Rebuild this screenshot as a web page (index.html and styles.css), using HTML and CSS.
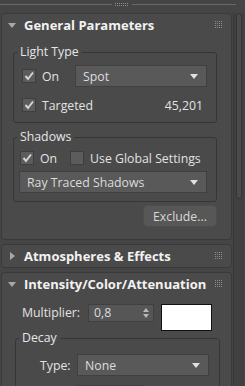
FILE: index.html
```html
<!DOCTYPE html>
<html>
<head>
<meta charset="utf-8">
<link rel="stylesheet" href="styles.css">
</head>
<body>
<svg class="defs" width="0" height="0">
  <defs>
    <pattern id="dots" width="2" height="2" patternUnits="userSpaceOnUse">
      <rect width="1" height="1" fill="#8c8c8c"/>
    </pattern>
  </defs>
</svg>
<div class="topbar">
  <div class="line first"></div>
  <svg class="topgrip" width="13" height="3"><rect width="13" height="3" fill="url(#dots)"/></svg>
  <div class="line"></div>
</div>
<div class="main">
  <div class="rollouts">
    <section class="panel general">
      <div class="header">
        <span class="tri-down"></span>
        <span class="title">General Parameters</span>
        <svg class="grip" width="8" height="8"><rect width="8" height="8" fill="url(#dots)"/></svg>
      </div>
      <fieldset class="group light">
        <legend>Light Type</legend>
        <div class="row">
          <span class="check on"><svg width="14" height="14"><path d="M3.5 7 L6 10 L11 3.5" fill="none" stroke="#d4d4d4" stroke-width="2"/></svg></span>
          <span class="lbl">On</span>
          <div class="dropdown type"><span>Spot</span><span class="caret"></span></div>
        </div>
        <div class="row second">
          <span class="check on"><svg width="14" height="14"><path d="M3.5 7 L6 10 L11 3.5" fill="none" stroke="#d4d4d4" stroke-width="2"/></svg></span>
          <span class="lbl">Targeted</span>
          <span class="value">45,201</span>
        </div>
      </fieldset>
      <fieldset class="group shadows">
        <legend>Shadows</legend>
        <div class="row checks">
          <span class="check on"><svg width="14" height="14"><path d="M3.5 7 L6 10 L11 3.5" fill="none" stroke="#d4d4d4" stroke-width="2"/></svg></span>
          <span class="lbl">On</span>
          <span class="check off"></span>
          <span class="lbl">Use Global Settings</span>
        </div>
        <div class="dropdown wide"><span>Ray Traced Shadows</span><span class="caret"></span></div>
      </fieldset>
      <button class="btn">Exclude...</button>
    </section>
    <section class="panel collapsed">
      <div class="header">
        <span class="tri-right"></span>
        <span class="title">Atmospheres &amp; Effects</span>
        <svg class="grip" width="8" height="8"><rect width="8" height="8" fill="url(#dots)"/></svg>
      </div>
    </section>
    <section class="panel intensity">
      <div class="header">
        <span class="tri-down"></span>
        <span class="title">Intensity/Color/Attenuation</span>
        <svg class="grip" width="8" height="8"><rect width="8" height="8" fill="url(#dots)"/></svg>
      </div>
      <div class="mult-row">
        <span class="lbl">Multiplier:</span>
        <div class="spinner"><span>0,8</span><span class="arrows"><i class="up"></i><i class="down"></i></span></div>
        <div class="swatch"></div>
      </div>
      <fieldset class="group decay">
        <legend>Decay</legend>
        <div class="row">
          <span class="lbl">Type:</span>
          <div class="dropdown type"><span>None</span><span class="caret"></span></div>
        </div>
        <div class="row start">
          <div class="spinner small"></div>
        </div>
      </fieldset>
    </section>
  </div>
  <div class="scroll">
    <div class="thumb"></div>
  </div>
</div>
</body>
</html>
```

FILE: styles.css
```css
html, body {
  margin: 0;
  padding: 0;
}
body {
  width: 245px;
  height: 386px;
  overflow: hidden;
  background: #454545;
  font-family: "Open Sans", "Noto Sans", sans-serif;
  font-size: 12.3px;
  color: #e2e2e2;
}
.defs {
  position: absolute;
}
.topbar {
  display: flex;
  align-items: flex-start;
  width: 236px;
  height: 13px;
  box-sizing: border-box;
  padding-top: 3px;
}
.topbar .line {
  flex: 1;
  height: 1px;
  margin-top: 1px;
  background: #686868;
}
.topbar .line.first {
  flex: 0 0 112px;
}
.topgrip {
  margin: 0 4px 0 3px;
}
.main {
  display: flex;
  align-items: flex-start;
}
.rollouts {
  width: 231px;
  margin-left: 1px;
  display: flex;
  flex-direction: column;
  gap: 4px;
}
.panel {
  border: 1px solid #393939;
  border-radius: 4px;
  background: #4a4a4a;
  display: flex;
  flex-direction: column;
}
.panel.general {
  padding-bottom: 12px;
}
.panel.intensity {
  height: 115px;
  overflow: hidden;
  border-bottom: none;
  border-bottom-left-radius: 0;
  border-bottom-right-radius: 0;
}
.header {
  height: 22px;
  flex: none;
  display: flex;
  align-items: center;
  padding: 0 8px 0 6px;
}
.title {
  font-size: 13px;
  font-weight: bold;
  color: #f2f2f2;
  margin-left: 8px;
  flex: 1;
  white-space: nowrap;
}
.tri-down {
  width: 0;
  height: 0;
  border-left: 4px solid transparent;
  border-right: 4px solid transparent;
  border-top: 5px solid #a8a8a8;
}
.tri-right {
  width: 0;
  height: 0;
  margin-left: 2px;
  margin-right: 1px;
  border-top: 4px solid transparent;
  border-bottom: 4px solid transparent;
  border-left: 5px solid #a8a8a8;
}
.grip {
  flex: none;
}
.group {
  margin: 8px 14px 0 11px;
  border: 1px solid #363636;
  border-radius: 3px;
  padding: 5px 9px 6px 8px;
  min-width: 0;
  flex: none;
}
.group legend {
  line-height: 16px;
  padding: 0 3px;
  margin-left: -5px;
  color: #e6e6e6;
}
.row {
  display: flex;
  align-items: center;
  height: 22px;
}
.row.second {
  margin-top: 7px;
}
.check {
  width: 14px;
  height: 14px;
  box-sizing: border-box;
  background: #5c5c5c;
  border: 1px solid #3e3e3e;
  display: flex;
  align-items: center;
  justify-content: center;
  flex: none;
}
.check svg {
  margin: -1px;
}
.lbl {
  margin-left: 6px;
  white-space: nowrap;
}
.value {
  margin-left: auto;
  margin-right: 4px;
}
.dropdown {
  height: 22px;
  box-sizing: border-box;
  background: #595959;
  border: 1px solid #404040;
  display: flex;
  align-items: center;
  padding: 0 8px 0 7px;
  justify-content: space-between;
  color: #dcdcdc;
}
.dropdown.type {
  width: 132px;
  margin-left: auto;
}
.caret {
  width: 0;
  height: 0;
  border-left: 4px solid transparent;
  border-right: 4px solid transparent;
  border-top: 5px solid #e0e0e0;
}
.group.shadows {
  margin-top: 6px;
  padding: 3px 9px 8px 5px;
}
.group.shadows legend {
  margin-left: -2px;
}
.row.checks {
  height: 20px;
}
.row.checks .check:first-child {
  margin-left: 1px;
}
.row.checks .check.off {
  margin-left: 13px;
}
.dropdown.wide {
  margin-top: 3px;
}
.btn {
  align-self: flex-end;
  margin: 3px 14px 0 0;
  width: 74px;
  height: 22px;
  border: 1px solid #4e4e4e;
  border-radius: 4px;
  background: #575757;
  color: #d8d8d8;
  font-family: inherit;
  font-size: 12.3px;
  padding: 0;
}
.mult-row {
  display: flex;
  align-items: flex-start;
  margin-top: 9px;
  padding-left: 14px;
}
.mult-row .lbl {
  line-height: 18px;
  width: 66px;
}
.spinner {
  width: 66px;
  height: 18px;
  box-sizing: border-box;
  background: #565656;
  border: 1px solid #404040;
  display: flex;
  align-items: center;
  justify-content: space-between;
  padding: 0 4px 0 5px;
  color: #dcdcdc;
  line-height: 16px;
}
.arrows {
  display: flex;
  flex-direction: column;
  gap: 2px;
}
.arrows i {
  width: 0;
  height: 0;
  border-left: 3px solid transparent;
  border-right: 3px solid transparent;
}
.arrows .up {
  border-bottom: 4px solid #b8b8b8;
}
.arrows .down {
  border-top: 4px solid #b8b8b8;
}
.swatch {
  width: 51px;
  height: 27px;
  box-sizing: border-box;
  background: #fff;
  border: 1px solid #111;
  margin-left: 7px;
}
.group.decay {
  margin: 0 11px 0 13px;
  padding: 9px 10px 0 18px;
}
.group.decay legend {
  line-height: 14px;
  margin-left: -15px;
}
.row.start {
  margin-top: 9px;
  padding-left: 43px;
}
.spinner.small {
  height: 22px;
}
.scroll {
  width: 11px;
  margin-left: 1px;
  height: 373px;
  background: #404040;
  border-left: 1px solid #383838;
  box-sizing: border-box;
  padding-left: 2px;
}
.thumb {
  width: 6px;
  height: 186px;
  box-sizing: border-box;
  background: #4b4b4b;
  border: 1px solid #343434;
  border-radius: 3px;
}
```
